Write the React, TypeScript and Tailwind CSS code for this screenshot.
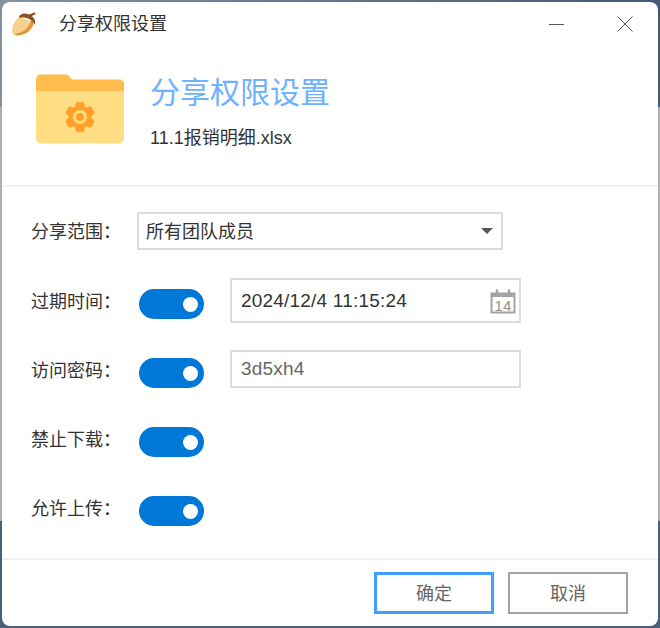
const labelFont = "font-['Liberation_Sans','Noto_Sans_CJK_SC',sans-serif]";

const Toggle = () => (
  <div className="flex items-center justify-end w-[65px] h-[30px] pr-[6px] rounded-[15px] bg-[#0078d7] shrink-0">
    <div className="w-[15px] h-[15px] rounded-full bg-white" />
  </div>
);

const Acorn = () => (
  <svg width="26" height="24" viewBox="0 0 26 24">
    <path d="M18 4 L23.500 1.500" stroke="#8a4a1c" strokeWidth="2" strokeLinecap="round" />
    <path d="M9 5 C4 8 1 13 1 19 C1 22 3 23.500 6 23.500 C14 23.500 21 18 23 11 Z" fill="#f8d08c" />
    <path d="M6 23.500 C14 23.500 21 18 23 11 L20 8 C19 14 13 21 4 22 C4.500 23 5 23.500 6 23.500 Z" fill="#dc9840" />
    <path d="M8 6 C8 2 13 0.500 17 2 C22 3.500 25 8 24 12.500 C20 7 15 4.500 8 6 Z" fill="#95501f" />
  </svg>
);

const FolderIcon = () => (
  <svg width="88" height="70" viewBox="0 0 88 70">
    <path d="M0 6 C0 2.500 2 0.500 5 0.500 L29 0.500 C31 0.500 32 1 33 2 L36 5.500 L83 5.500 C86 5.500 88 7.500 88 10 L88 18 L0 18 Z" fill="#ffbd4d" />
    <path d="M0 17 L88 17 L88 63 C88 67 86 69.500 82 69.500 L6 69.500 C2 69.500 0 67 0 63 Z" fill="#ffdd83" />
    <g transform="translate(44 43)">
      <g fill="#ffa028">
        <circle r="11.500" />
        <rect x="-4.500" y="-15" width="9" height="30" rx="2.500" />
        <rect x="-4.500" y="-15" width="9" height="30" rx="2.500" transform="rotate(60)" />
        <rect x="-4.500" y="-15" width="9" height="30" rx="2.500" transform="rotate(120)" />
      </g>
      <circle r="5.500" fill="none" stroke="#ffdd83" strokeWidth="3" />
    </g>
  </svg>
);

const CalendarIcon = () => (
  <svg width="26" height="26" viewBox="0 0 26 26" className="shrink-0">
    <path d="M1.500 5.500 H24.500 V24.500 H1.500 Z" fill="none" stroke="#a3a3a3" strokeWidth="2" />
    <rect x="1" y="5" width="24" height="4" fill="#a3a3a3" />
    <path d="M7 6 V2.500 M19 6 V2.500" stroke="#a3a3a3" strokeWidth="2.500" strokeLinecap="round" />
    <text x="13" y="22.500" textAnchor="middle" fontSize="15" fill="#8f8f8f" fontFamily="Liberation Sans">14</text>
  </svg>
);

const ToggleRow = ({ label, compact, children }: { label: string; compact?: boolean; children?: React.ReactNode }) => (
  <div className="flex items-start h-[45px]">
    <div className={`w-[108px] shrink-0 text-[18px] leading-[24px] text-[#333] ${compact ? "pt-[9px]" : "pt-[12px]"}`}>
      {label}
    </div>
    <div className={compact ? "pt-[8px]" : "pt-[11px]"}>
      <Toggle />
    </div>
    {children}
  </div>
);

export default function App() {
  return (
    <div className={`w-[660px] h-[628px] p-[2px] bg-[linear-gradient(180deg,transparent_17%,#b0b0b0_17%,#b0b0b0_83%,#4a5f78_83%),linear-gradient(90deg,#8492a0,#44597a)] ${labelFont}`}>
      <div className="flex flex-col h-full rounded-[8px] bg-white overflow-hidden">
        {/* title bar */}
        <div className="flex items-center h-[44px] shrink-0 pl-[9px] pr-[25px]">
          <Acorn />
          <span className="ml-[22px] text-[18px] text-[#333]">分享权限设置</span>
          <div className="ml-auto flex items-center gap-[53px]">
            <div className="w-[15px] h-px bg-[#555]" />
            <svg width="16" height="16" viewBox="0 0 16 16">
              <path d="M0.500 0.500 L15.500 15.500 M15.500 0.500 L0.500 15.500" stroke="#555" strokeWidth="1" />
            </svg>
          </div>
        </div>

        {/* header */}
        <div className="flex items-start h-[141px] shrink-0 pl-[34px] pt-[28px] border-b-2 border-[#f0f0f0]">
          <FolderIcon />
          <div className="ml-[26px] flex flex-col">
            <span className="text-[30px] leading-[38px] text-[#70b1ff]">分享权限设置</span>
            <span className="mt-[14px] text-[18px] leading-[24px] text-[#333]">11.1报销明细.xlsx</span>
          </div>
        </div>

        {/* form */}
        <div className="flex flex-col flex-1 pl-[29px] pt-[25px]">
          <div className="flex items-center h-[38px]">
            <span className="w-[106px] shrink-0 pt-[2px] text-[18px] leading-[24px] text-[#333]">分享范围：</span>
            <div className="flex items-center justify-between w-[366px] h-[38px] pl-[7px] pr-[8px] border-2 border-[#dcdcdc] text-[18px] text-[#333]">
              <span className="pt-[2px]">所有团队成员</span>
              <div className="w-0 h-0 border-x-[6px] border-x-transparent border-t-[6px] border-t-[#555]" />
            </div>
          </div>
          <div className="mt-[28px]">
            <ToggleRow label="过期时间：">
              <div className="ml-[26px] flex items-center justify-between w-[291px] h-[45px] pl-[9px] pr-[3px] border-2 border-[#dcdcdc] text-[19px] tracking-[0.2px] text-[#333]">
                <span className="pt-px">2024/12/4 11:15:24</span>
                <CalendarIcon />
              </div>
            </ToggleRow>
          </div>
          <div className="mt-[27px]">
            <ToggleRow label="访问密码：" compact>
              <div className="ml-[26px] flex items-center w-[291px] h-[38px] pl-[9px] pt-px border-2 border-[#dcdcdc] text-[19px] tracking-[0.2px] text-[#666]">
                3d5xh4
              </div>
            </ToggleRow>
          </div>
          <div className="mt-[21px]">
            <ToggleRow label="禁止下载：" />
          </div>
          <div className="mt-[24px]">
            <ToggleRow label="允许上传：" />
          </div>
        </div>

        {/* footer */}
        <div className="flex items-center justify-end gap-[14px] h-[68px] shrink-0 pr-[30px] border-t-2 border-[#f0f0f0]">
          <button className="w-[120px] h-[42px] pt-[2px] border-[3px] border-[#409eff] text-[18px] text-[#666]">确定</button>
          <button className="w-[120px] h-[42px] pt-[2px] border-2 border-[#a3a3a3] text-[18px] text-[#666]">取消</button>
        </div>
      </div>
    </div>
  );
}
